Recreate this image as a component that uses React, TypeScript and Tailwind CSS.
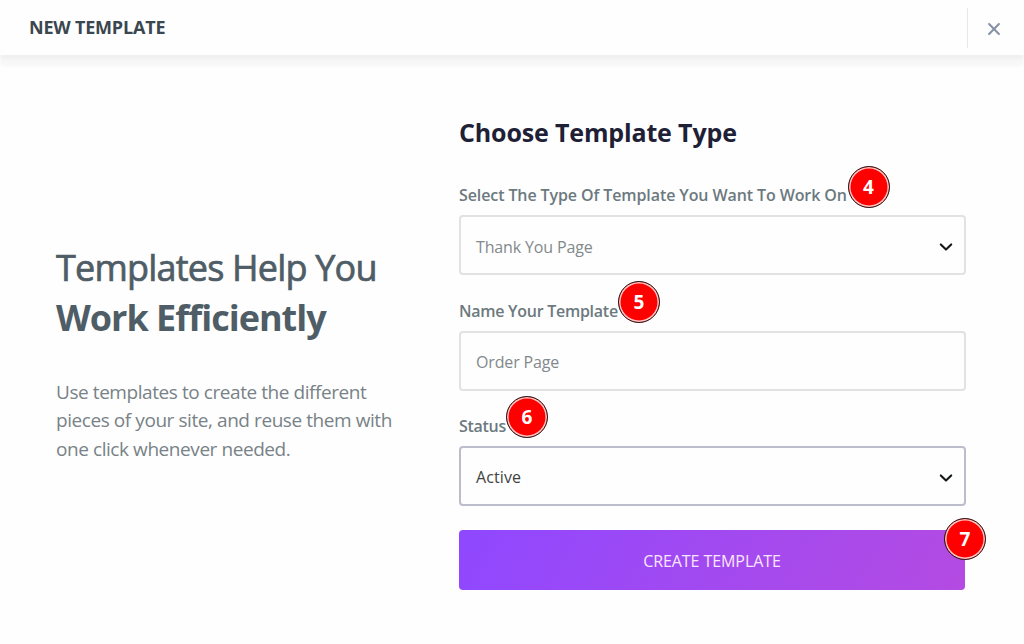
import type { ReactNode } from "react";
import { clsx } from "clsx";

function StepBadge({ step, className }: { step: number; className: string }) {
  return (
    <span
      className={clsx(
        "absolute flex h-[42px] w-[42px] items-center justify-center rounded-full border border-[#2b1b1b] bg-[#fe0000] text-[19px] font-bold tracking-normal text-white shadow-[inset_0_0_0_1.5px_#ffc4c4]",
        className
      )}
    >
      {step}
    </span>
  );
}

function Chevron() {
  return (
    <svg className="mt-[4px]" width="14" height="10" viewBox="0 0 14 10" fill="none" stroke="#15181b" strokeWidth="2.1" strokeLinecap="round" strokeLinejoin="round">
      <path d="M1.8 2.4 7 7.6l5.2-5.2" />
    </svg>
  );
}

function FieldLabel({ children, className }: { children: ReactNode; className: string }) {
  return (
    <div className="flex h-6 items-center">
      <label className={clsx("relative whitespace-nowrap text-base leading-6 font-semibold text-[#6c797e]", className)}>
        {children}
      </label>
    </div>
  );
}

export default function App() {
  return (
    <div className="flex h-[644px] w-[1024px] flex-col overflow-hidden bg-[#fefefe] font-['Open_Sans','Noto_Sans',sans-serif]">
      <header className="flex h-[55px] shrink-0 items-center justify-between bg-[#fefefe] pl-[29px] shadow-[0_4px_2px_rgba(0,0,0,0.025),0_11px_4px_rgba(0,0,0,0.03)]">
        <h1 className="text-[18px] font-bold tracking-[-0.2px] text-[#3a474e]">NEW TEMPLATE</h1>
        <button className="mt-px flex h-10 w-[57px] items-center justify-center border-l border-[#e6e7e9] pr-1" aria-label="Close">
          <svg className="mt-[2px]" width="14" height="14" viewBox="0 0 14 14" stroke="#8792a5" strokeWidth="2.1" strokeLinecap="round">
            <path d="m2.1 2.1 9.8 9.8M11.9 2.1 2.1 11.9" />
          </svg>
        </button>
      </header>

      <main className="flex flex-1">
        <section className="w-[459px] pt-[188px] pl-14">
          <h2 className="whitespace-nowrap text-[36px] leading-[50px] text-[#4f5d66]">
            <span className="block tracking-[-0.8px] [-webkit-text-stroke:0.7px_#4f5d66]">Templates Help You</span>
            <span className="block font-bold tracking-[-1px]">Work Efficiently</span>
          </h2>
          <p className="mt-[35px] whitespace-nowrap text-[19px] leading-[28.3px] tracking-[-0.43px] text-[#788287]">
            Use templates to create the different
            <br />
            pieces of your site, and reuse them with
            <br />
            one click whenever needed.
          </p>
        </section>

        <section className="w-[507px] pt-[59px]">
          <h3 className="mb-[33px] whitespace-nowrap text-[25px] leading-9 font-bold tracking-[-0.15px] text-[#1e2136]">
            Choose Template Type
          </h3>

          <FieldLabel className="tracking-[-0.1px]">
            Select The Type Of Template You Want To Work On
            <StepBadge step={4} className="-top-[17px] left-[388.5px]" />
          </FieldLabel>
          <div className="mt-2 flex h-[60px] items-center justify-between rounded-[4px] border-2 border-[#e1e2e4] pr-[11px] pl-[15px] text-base text-[#82898c]">
            <span className="pt-[3px] tracking-[-0.15px]">Thank You Page</span>
            <Chevron />
          </div>

          <div className="mt-6">
            <FieldLabel className="tracking-[-0.27px]">
              Name Your Template
              <StepBadge step={5} className="-top-[18px] left-[159px]" />
            </FieldLabel>
          </div>
          <div className="mt-2 flex h-[60px] items-center rounded-[4px] border-2 border-[#e1e2e4] pl-[15px] text-base text-[#82898c]">
            <span className="pt-px tracking-[-0.15px]">Order Page</span>
          </div>

          <div className="mt-[23px]">
            <FieldLabel className="tracking-[-0.3px]">
              Status
              <StepBadge step={6} className="-top-[18px] left-[47px]" />
            </FieldLabel>
          </div>
          <div className="mt-2 flex h-[60px] items-center justify-between rounded-[4px] border-2 border-[#bbbdca] pr-[11px] pl-[15px] text-base text-[#3e4442]">
            <span className="pt-px tracking-[0.1px]">Active</span>
            <Chevron />
          </div>

          <button className="relative mt-6 flex h-[60px] w-[506px] items-center justify-center rounded-[4px] bg-linear-[118deg] from-[#8f48ff] to-[#b44be2] text-base text-[#fae6ff]">
            <span className="pt-[2px] tracking-[-0.07px]">CREATE TEMPLATE</span>
            <StepBadge step={7} className="-top-[12px] left-[485px]" />
          </button>
        </section>
      </main>
    </div>
  );
}
